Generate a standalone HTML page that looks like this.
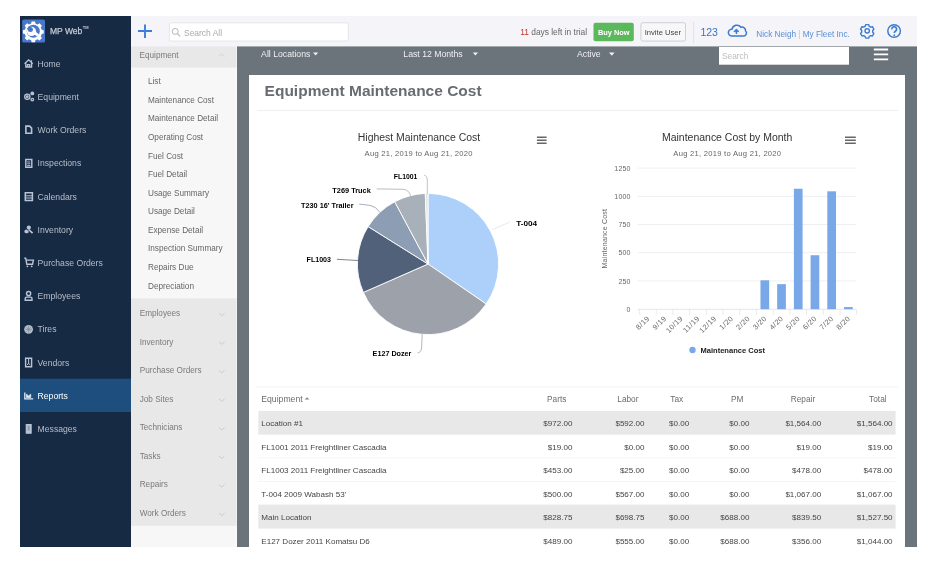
<!DOCTYPE html>
<html><head><meta charset="utf-8">
<style>
html,body{margin:0;padding:0}
body{width:938px;height:563px;background:#fff;position:relative;overflow:hidden;font-family:"Liberation Sans",sans-serif}
svg{position:absolute;left:0;top:0;will-change:transform}
text{font-family:"Liberation Sans",sans-serif}
.st{fill:#b7bec9;font-size:8.65px}
.sl{fill:#666;font-size:8.2px}
.sh{fill:#7a7a7a;font-size:8.2px}
.ic{fill:none;stroke:#b9c3d3;stroke-width:1.3}
.fb{fill:#f0f1f3;font-size:8.7px}
.tb{fill:#454545;font-size:8.05px}
.th{fill:#6c6c6c;font-size:8.3px}
.dl{fill:#000;font-size:7.1px;font-weight:bold}
.ax{fill:#666;font-size:7px;letter-spacing:0.2px}
</style></head><body>
<svg width="938" height="563" viewBox="0 0 938 563">
<!-- backgrounds -->
<rect x="20" y="16" width="111" height="531" fill="#172a44"/>
<rect x="131" y="16" width="786" height="30.4" fill="#f4f4f9"/>
<rect x="237" y="46.4" width="680" height="500.6" fill="#6b737b"/>
<rect x="131" y="46.4" width="105.5" height="500.6" fill="#f7f7f7"/>
<rect x="249" y="75" width="656" height="472" fill="#fff"/>

<!-- SIDEBAR -->
<g id="sidebar">
    <g id="logo">
    <rect x="22.2" y="19.6" width="22.8" height="22.9" rx="1.6" fill="#4a78c8"/>
    <g transform="translate(33.3,31.2)">
    <path fill="#fff" d="M-1.7,-9.7h3.4l0.4,2a7.6,7.6 0 0 1 2.3,1l1.8,-1.2l2.4,2.4l-1.2,1.8a7.6,7.6 0 0 1 1,2.3l2,0.4v3.4l-2,0.4a7.6,7.6 0 0 1 -1,2.3l1.2,1.8l-2.4,2.4l-1.8,-1.2a7.6,7.6 0 0 1 -2.3,1l-0.4,2h-3.4l-0.4,-2a7.6,7.6 0 0 1 -2.3,-1l-1.8,1.2l-2.4,-2.4l1.2,-1.8a7.6,7.6 0 0 1 -1,-2.3l-2,-0.4v-3.4l2,-0.4a7.6,7.6 0 0 1 1,-2.3l-1.2,-1.8l2.4,-2.4l1.8,1.2a7.6,7.6 0 0 1 2.3,-1z"/>
    <circle r="6.5" fill="#4a78c8"/>
    <clipPath id="lc"><circle r="6.5"/></clipPath>
    <g clip-path="url(#lc)">
      <circle cx="-1.8" cy="0.2" r="4.6" fill="#fff"/>
      <path d="M-1.5,-0.5L8,6.5" stroke="#fff" stroke-width="3"/>
      <circle cx="-2.9" cy="-1.6" r="2.5" fill="#4a78c8"/>
      <path d="M-2.9,-1.6L-8,-6.5" stroke="#4a78c8" stroke-width="3"/>
    </g>
    </g>
  </g>
  <text x="49.9" y="33.5" fill="#c8ccd3" stroke="#c8ccd3" stroke-width="0.25" font-size="9.5" textLength="32.4" lengthAdjust="spacingAndGlyphs">MP Web</text><text x="82.7" y="29.4" fill="#c8ccd3" font-size="4.4" font-weight="bold" textLength="5.8" lengthAdjust="spacingAndGlyphs">TM</text>

  <g class="ic">
    <!-- home -->
    <path d="M24.6,63.8L28.6,59.8L32.8,63.8M25.8,62.6V67H31.6V62.6M27.5,67V64.6H29.7V67M31.4,60.2V61.8"/>
    <!-- equipment gears -->
    <circle cx="27.3" cy="96.8" r="2.6"/><circle cx="27.3" cy="96.8" r="0.8"/>
    <circle cx="32.3" cy="93.4" r="1.3" fill="#b9c3d3"/><circle cx="32.3" cy="99.6" r="1.3"/>
    <!-- work orders doc -->
    <path d="M25.9,126.1H29.6L31.6,128.1V133.2H25.9Z" stroke-width="1.6"/>
    <!-- inspections clipboard -->
    <path d="M25.8,159.5H31.8V167.2H25.8Z" stroke-width="1.4"/><path d="M27.2,162H30.3M27.2,163.8H30.3M27.2,165.5H30.3" stroke-width="0.9"/>
    <!-- calendar -->
    <path d="M25.3,192.8H32.4V200.6H25.3Z" stroke-width="1.5"/><path d="M25.8,195.8H32M25.8,198H32" stroke-width="1"/>
    <!-- inventory -->
    <circle cx="28.8" cy="227.6" r="2.1" fill="#b9c3d3" stroke="none"/><ellipse cx="26.6" cy="231.4" rx="2.2" ry="1.9" fill="#b9c3d3" stroke="none"/><path d="M28.6,229.6L32.6,233.2" stroke-width="1.8"/><path d="M27,229.3L30,232.4" stroke="#172a44" stroke-width="0.7"/>
    <!-- cart -->
    <path d="M24.3,258.2H25.7L26.8,264.3H32.5L33.4,260.1H26" stroke-width="1.4"/><circle cx="27.4" cy="266.3" r="0.9" fill="#b9c3d3" stroke="none"/><circle cx="31.7" cy="266.3" r="0.9" fill="#b9c3d3" stroke="none"/>
    <!-- employees -->
    <circle cx="28.6" cy="293.6" r="2.1" stroke-width="1.4"/><path d="M25.2,300.2V298.4Q25.2,297.1 26.6,297.1H30.6Q32,297.1 32,298.4V300.2Z" stroke-width="1.4"/>
    <!-- tires -->
    <circle cx="28.6" cy="329.3" r="4.4" fill="#b3bdcb" stroke="none"/><path d="M26.4,327.3L30.8,331.3M30.8,327.3L26.4,331.3M28.6,325.8V332.8M25.2,329.3H32" stroke="#7d8aa0" stroke-width="0.7"/>
    <!-- vendors -->
    <path d="M25.6,358.3H31.6V366.7H25.6Z" stroke-width="1.4"/><path d="M28.6,358.6V364M27,364.8L28.6,363.6L30.2,364.8" stroke-width="1"/>
    <!-- reports -->
    <path d="M24.8,392.4V398.8H33.2" stroke="#dfe9f5" stroke-width="1.3"/><path d="M26.5,397.6V394.2L28.6,396L30.7,394.2V397.6Z" fill="#dfe9f5" stroke="#dfe9f5" stroke-width="0.8"/>
    <!-- messages phone -->
    <path d="M26.3,424.6H31.1V433.2H26.3Z" fill="#b9c3d3" stroke-width="1.2"/><path d="M27.6,425.8H29.8V430.6H27.6Z" fill="#8f9bb0" stroke="none"/>
  </g>
  <rect x="20" y="378.7" width="111" height="33.3" fill="#1d4e7e"/>
  <path d="M24.8,392.4V398.8H33.2" fill="none" stroke="#dfe9f5" stroke-width="1.3"/><path d="M26.5,397.6V394.2L28.6,396L30.7,394.2V397.6Z" fill="#dfe9f5" stroke="#dfe9f5" stroke-width="0.8"/>

  <text class="st" x="37.6" y="66.8">Home</text>
  <text class="st" x="37.6" y="100.4">Equipment</text>
  <text class="st" x="37.6" y="133.2">Work Orders</text>
  <text class="st" x="37.6" y="166">Inspections</text>
  <text class="st" x="37.6" y="199.6">Calendars</text>
  <text class="st" x="37.6" y="232.8">Inventory</text>
  <text class="st" x="37.6" y="265.6">Purchase Orders</text>
  <text class="st" x="37.6" y="299.2">Employees</text>
  <text class="st" x="37.6" y="332.4">Tires</text>
  <text class="st" x="37.6" y="365.6">Vendors</text>
  <text class="st" x="37.6" y="399.2" style="fill:#fff">Reports</text>
  <text class="st" x="37.6" y="432">Messages</text>
</g>
<g id="topbar">
  <path d="M138,31H152M145,24.4V38" stroke="#3b7dd8" stroke-width="1.9" fill="none"/>
  <rect x="169.3" y="22.8" width="179" height="18.3" rx="2" fill="#fff" stroke="#e4e4ea" stroke-width="1"/>
  <circle cx="175.2" cy="31.4" r="3" fill="none" stroke="#b5b5b5" stroke-width="1"/>
  <path d="M177.4,33.6L180.2,36.4" stroke="#b5b5b5" stroke-width="1.1"/>
  <text x="184" y="35.7" fill="#aaaaaa" font-size="9.2" textLength="38.1" lengthAdjust="spacingAndGlyphs">Search All</text>
  <text x="520.2" y="35.2" font-size="8.4"><tspan fill="#c0392b">11</tspan><tspan fill="#666"> days left in trial</tspan></text>
  <rect x="593.5" y="22.7" width="40.3" height="18.6" rx="2" fill="#5cb85c"/>
  <text x="597.9" y="35" fill="#fff" font-size="7.41" font-weight="bold">Buy Now</text>
  <rect x="640.9" y="22.7" width="44.6" height="18.4" rx="2" fill="#f7f7f9" stroke="#cfcfd4" stroke-width="1"/>
  <text x="644.7" y="35.3" fill="#444" font-size="7.64">Invite User</text>
  <path d="M693.5,21.5V43" stroke="#e2e3e8" stroke-width="1"/>
  <text x="700.4" y="36.1" fill="#3a74c2" font-size="10.55">123</text>
  <path d="M731.5,36H743.2A3,3 0 0 0 745.5,30.8A3.4,3.4 0 0 0 741,27.3A5,5 0 0 0 732,29.2A3.4,3.4 0 0 0 731.5,36Z" fill="none" stroke="#3b7bd2" stroke-width="1.5"/>
  <path d="M733.8,31.6L736.4,29L739,31.6Z" fill="#3b7bd2" stroke="#3b7bd2" stroke-width="0.8"/><path d="M736.4,30.5V34" stroke="#3b7bd2" stroke-width="1.5"/>
  <text x="756.3" y="36.5" fill="#5a8fd6" font-size="8.22">Nick Neigh <tspan fill="#b9c6dc">|</tspan> My Fleet Inc.</text>
  <g transform="translate(867.2,30.8)" fill="none" stroke="#3b7bd2" stroke-width="1.4">
    <path d="M-1.5,-6.2h3l0.5,1.6l1.5,0.9l1.7,-0.4l1.5,2.6l-1.2,1.2v1.7l1.2,1.2l-1.5,2.6l-1.7,-0.4l-1.5,0.9l-0.5,1.6h-3l-0.5,-1.6l-1.5,-0.9l-1.7,0.4l-1.5,-2.6l1.2,-1.2v-1.7l-1.2,-1.2l1.5,-2.6l1.7,0.4l1.5,-0.9z" stroke-linejoin="round"/>
    <circle r="2.2"/>
  </g>
  <circle cx="894.1" cy="30.95" r="6.3" fill="none" stroke="#3b7bd2" stroke-width="1.45"/>
  <path d="M891.9,29.3A2.35,2.35 0 1 1 895.6,31Q894.3,31.7 894.3,32.9V32.7" fill="none" stroke="#3b7bd2" stroke-width="1.7"/><circle cx="894.3" cy="35.2" r="0.9" fill="#3b7bd2"/>
</g>

<g id="submenu">
  <rect x="131" y="46.4" width="105.5" height="21.2" fill="#e8e8e8"/>
  <text class="sh" x="139.5" y="57.5">Equipment</text>
  <path d="M219,56.3L221.8,53.8L224.6,56.3" fill="none" stroke="#cfcfcf" stroke-width="0.9"/>
  <text class="sl" x="148" y="84.2">List</text>
  <text class="sl" x="148" y="102.8">Maintenance Cost</text>
  <text class="sl" x="148" y="121.4">Maintenance Detail</text>
  <text class="sl" x="148" y="139.9">Operating Cost</text>
  <text class="sl" x="148" y="158.5">Fuel Cost</text>
  <text class="sl" x="148" y="177.1">Fuel Detail</text>
  <text class="sl" x="148" y="195.7">Usage Summary</text>
  <text class="sl" x="148" y="214.3">Usage Detail</text>
  <text class="sl" x="148" y="232.9">Expense Detail</text>
  <text class="sl" x="148" y="251.4">Inspection Summary</text>
  <text class="sl" x="148" y="270">Repairs Due</text>
  <text class="sl" x="148" y="288.6">Depreciation</text>
  <rect x="131" y="298.3" width="105.5" height="227.5" fill="#e8e8e8"/>
  <g fill="none" stroke="#c6c6c6" stroke-width="0.9">
  <path d="M219,313.2L221.8,315.7L224.6,313.2"/>
  <path d="M219,341.8L221.8,344.3L224.6,341.8"/>
  <path d="M219,370.3L221.8,372.8L224.6,370.3"/>
  <path d="M219,398.9L221.8,401.4L224.6,398.9"/>
  <path d="M219,427.5L221.8,430L224.6,427.5"/>
  <path d="M219,456L221.8,458.5L224.6,456"/>
  <path d="M219,484.6L221.8,487.1L224.6,484.6"/>
  <path d="M219,513.1L221.8,515.6L224.6,513.1"/>
  </g>
  <text class="sh" x="139.7" y="315.9">Employees</text>
  <text class="sh" x="139.7" y="344.5">Inventory</text>
  <text class="sh" x="139.7" y="373">Purchase Orders</text>
  <text class="sh" x="139.7" y="401.6">Job Sites</text>
  <text class="sh" x="139.7" y="430.2">Technicians</text>
  <text class="sh" x="139.7" y="458.7">Tasks</text>
  <text class="sh" x="139.7" y="487.3">Repairs</text>
  <text class="sh" x="139.7" y="515.8">Work Orders</text>
</g>

<g id="filter">
  <text class="fb" x="261.1" y="56.8">All Locations</text>
  <path d="M313,52.6H318.2L315.6,55.6Z" fill="#f0f1f3"/>
  <text class="fb" x="403.3" y="57">Last 12 Months</text>
  <path d="M472.8,52.6H478L475.4,55.6Z" fill="#f0f1f3"/>
  <text class="fb" x="577" y="56.5" font-size="8.48">Active</text>
  <path d="M609,52.6H614.6L611.8,55.8Z" fill="#f0f1f3"/>
  <rect x="719" y="47" width="130" height="17.7" fill="#fff"/>
  <text x="721.9" y="59.4" fill="#bdbdbd" font-size="8.4">Search</text>
  <path d="M873.8,49.5H888.2M873.8,54.4H888.2M873.8,59.3H888.2" stroke="#fff" stroke-width="1.8"/>
</g>

<g id="content">
<text transform="translate(264.6,96) scale(1,1.03)" x="0" y="0" fill="#686c71" font-size="15.1" font-weight="bold" textLength="217" lengthAdjust="spacingAndGlyphs">Equipment Maintenance Cost</text>
<rect x="257" y="110" width="641" height="0.8" fill="#ececec"/>
<text x="357.8" y="140.7" fill="#333" font-size="10.44">Highest Maintenance Cost</text>
<text x="364.6" y="156.3" fill="#666" font-size="7.6" letter-spacing="0.27">Aug 21, 2019 to Aug 21, 2020</text>
<path d="M536.9,137.3H546.6M536.9,140.3H546.6M536.9,143.3H546.6" stroke="#666" stroke-width="1.45"/>
<path d="M428,264L428.00,193.40A70.6,70.6 0 0 1 486.20,303.96Z" fill="#add0fa" stroke="#fff" stroke-width="0.9" stroke-linejoin="round"/>
<path d="M428,264L486.20,303.96A70.6,70.6 0 0 1 363.37,292.42Z" fill="#9da1a9" stroke="#fff" stroke-width="0.9" stroke-linejoin="round"/>
<path d="M428,264L363.37,292.42A70.6,70.6 0 0 1 368.14,226.56Z" fill="#516179" stroke="#fff" stroke-width="0.9" stroke-linejoin="round"/>
<path d="M428,264L368.14,226.56A70.6,70.6 0 0 1 394.73,201.73Z" fill="#8d9db4" stroke="#fff" stroke-width="0.9" stroke-linejoin="round"/>
<path d="M428,264L394.73,201.73A70.6,70.6 0 0 1 425.27,193.45Z" fill="#a8b0b9" stroke="#fff" stroke-width="0.9" stroke-linejoin="round"/>
<path d="M428,264L425.27,193.45A70.6,70.6 0 0 1 428.00,193.40Z" fill="#dfe4e2" stroke="#fff" stroke-width="0.9" stroke-linejoin="round"/>
<g fill="none" stroke-width="0.9">
<path d="M492.3,229.6L509.9,222" stroke="#dce6f2"/>
<path d="M422.2,334.4L421.6,348Q421,352.5 417.8,352.8" stroke="#a9adb3"/>
<path d="M358.2,260.5L336.9,259.3" stroke="#6d7889"/>
<path d="M380,212.5Q376,206.3 370,205.4L359.2,204.1" stroke="#9aa7bb"/>
<path d="M410.7,195.6Q408.5,189.5 403,189.3L376.8,188.9" stroke="#b0b6bd"/>
<path d="M427.3,194V180Q427,175.5 424.1,175.1" stroke="#b8bcbf"/>
</g>
<text class="dl" x="516.2" y="225.9" textLength="20.9" lengthAdjust="spacingAndGlyphs">T-004</text>
<text class="dl" x="372.6" y="356" textLength="38.8" lengthAdjust="spacingAndGlyphs">E127 Dozer</text>
<text class="dl" x="306.6" y="262" textLength="24.3" lengthAdjust="spacingAndGlyphs">FL1003</text>
<text class="dl" x="301" y="208" textLength="52.5" lengthAdjust="spacingAndGlyphs">T230 16' Trailer</text>
<text class="dl" x="332.3" y="193.4" textLength="38.5" lengthAdjust="spacingAndGlyphs">T269 Truck</text>
<text class="dl" x="393.8" y="179.2" textLength="23.6" lengthAdjust="spacingAndGlyphs">FL1001</text>
<text x="662" y="140.7" fill="#333" font-size="10.47">Maintenance Cost by Month</text>
<text x="673.3" y="156.3" fill="#666" font-size="7.6" letter-spacing="0.27">Aug 21, 2019 to Aug 21, 2020</text>
<path d="M845,137.3H855.8M845,140.3H855.8M845,143.3H855.8" stroke="#666" stroke-width="1.45"/>
<rect x="637.5" y="280.57" width="219" height="0.8" fill="#ebebeb"/>
<rect x="637.5" y="252.35" width="219" height="0.8" fill="#ebebeb"/>
<rect x="637.5" y="224.12" width="219" height="0.8" fill="#ebebeb"/>
<rect x="637.5" y="195.90" width="219" height="0.8" fill="#ebebeb"/>
<rect x="637.5" y="167.67" width="219" height="0.8" fill="#ebebeb"/>
<text class="ax" x="630.70" y="311.90" text-anchor="end">0</text>
<text class="ax" x="630.70" y="283.67" text-anchor="end">250</text>
<text class="ax" x="630.70" y="255.45" text-anchor="end">500</text>
<text class="ax" x="630.70" y="227.22" text-anchor="end">750</text>
<text class="ax" x="630.70" y="199.00" text-anchor="end">1000</text>
<text class="ax" x="630.70" y="170.77" text-anchor="end">1250</text>
<rect x="637.5" y="308.8" width="219" height="0.9" fill="#dfe3e8"/>
<rect x="639.10" y="309.2" width="0.8" height="5.8" fill="#e4e7ed"/>
<rect x="655.81" y="309.2" width="0.8" height="5.8" fill="#e4e7ed"/>
<rect x="672.52" y="309.2" width="0.8" height="5.8" fill="#e4e7ed"/>
<rect x="689.23" y="309.2" width="0.8" height="5.8" fill="#e4e7ed"/>
<rect x="705.94" y="309.2" width="0.8" height="5.8" fill="#e4e7ed"/>
<rect x="722.65" y="309.2" width="0.8" height="5.8" fill="#e4e7ed"/>
<rect x="739.36" y="309.2" width="0.8" height="5.8" fill="#e4e7ed"/>
<rect x="756.07" y="309.2" width="0.8" height="5.8" fill="#e4e7ed"/>
<rect x="772.78" y="309.2" width="0.8" height="5.8" fill="#e4e7ed"/>
<rect x="789.49" y="309.2" width="0.8" height="5.8" fill="#e4e7ed"/>
<rect x="806.20" y="309.2" width="0.8" height="5.8" fill="#e4e7ed"/>
<rect x="822.91" y="309.2" width="0.8" height="5.8" fill="#e4e7ed"/>
<rect x="839.62" y="309.2" width="0.8" height="5.8" fill="#e4e7ed"/>
<rect x="856.33" y="309.2" width="0.8" height="5.8" fill="#e4e7ed"/>
<text class="ax" transform="translate(650.15,318.9) rotate(-45)" text-anchor="end" style="font-size:7.4px;letter-spacing:0.45px">8/19</text>
<text class="ax" transform="translate(666.87,318.9) rotate(-45)" text-anchor="end" style="font-size:7.4px;letter-spacing:0.45px">9/19</text>
<text class="ax" transform="translate(683.57,318.9) rotate(-45)" text-anchor="end" style="font-size:7.4px;letter-spacing:0.45px">10/19</text>
<text class="ax" transform="translate(700.28,318.9) rotate(-45)" text-anchor="end" style="font-size:7.4px;letter-spacing:0.45px">11/19</text>
<text class="ax" transform="translate(717.00,318.9) rotate(-45)" text-anchor="end" style="font-size:7.4px;letter-spacing:0.45px">12/19</text>
<text class="ax" transform="translate(733.70,318.9) rotate(-45)" text-anchor="end" style="font-size:7.4px;letter-spacing:0.45px">1/20</text>
<text class="ax" transform="translate(750.41,318.9) rotate(-45)" text-anchor="end" style="font-size:7.4px;letter-spacing:0.45px">2/20</text>
<rect x="760.48" y="280.30" width="8.7" height="28.90" fill="#78a8e8"/>
<text class="ax" transform="translate(767.12,318.9) rotate(-45)" text-anchor="end" style="font-size:7.4px;letter-spacing:0.45px">3/20</text>
<rect x="777.18" y="284.14" width="8.7" height="25.06" fill="#78a8e8"/>
<text class="ax" transform="translate(783.83,318.9) rotate(-45)" text-anchor="end" style="font-size:7.4px;letter-spacing:0.45px">4/20</text>
<rect x="793.89" y="188.74" width="8.7" height="120.46" fill="#78a8e8"/>
<text class="ax" transform="translate(800.54,318.9) rotate(-45)" text-anchor="end" style="font-size:7.4px;letter-spacing:0.45px">5/20</text>
<rect x="810.61" y="255.23" width="8.7" height="53.97" fill="#78a8e8"/>
<text class="ax" transform="translate(817.25,318.9) rotate(-45)" text-anchor="end" style="font-size:7.4px;letter-spacing:0.45px">6/20</text>
<rect x="827.31" y="191.33" width="8.7" height="117.87" fill="#78a8e8"/>
<text class="ax" transform="translate(833.96,318.9) rotate(-45)" text-anchor="end" style="font-size:7.4px;letter-spacing:0.45px">7/20</text>
<rect x="844.02" y="307.05" width="8.7" height="2.15" fill="#78a8e8"/>
<text class="ax" transform="translate(850.67,318.9) rotate(-45)" text-anchor="end" style="font-size:7.4px;letter-spacing:0.45px">8/20</text>
<text class="ax" transform="translate(606.8,238.6) rotate(-90)" text-anchor="middle" letter-spacing="0.45">Maintenance Cost</text>
<circle cx="692.5" cy="350" r="3.2" fill="#78a8e8"/>
<text x="700.5" y="352.9" fill="#222" font-size="7.6" font-weight="bold" textLength="64.5" lengthAdjust="spacingAndGlyphs">Maintenance Cost</text>
<rect x="256" y="386.6" width="642" height="0.8" fill="#efefef"/>
<text class="th" x="261.3" y="402.3" textLength="41.3" lengthAdjust="spacingAndGlyphs">Equipment</text>
<path d="M304.6,399.6H309.4L307,397.3Z" fill="#888"/>
<text class="th" x="566.4" y="402.3" text-anchor="end">Parts</text>
<text class="th" x="638.5" y="402.3" text-anchor="end">Labor</text>
<text class="th" x="683.2" y="402.3" text-anchor="end">Tax</text>
<text class="th" x="743.4" y="402.3" text-anchor="end">PM</text>
<text class="th" x="815.2" y="402.3" text-anchor="end">Repair</text>
<text class="th" x="886.6" y="402.3" text-anchor="end">Total</text>
<rect x="258.3" y="410.90" width="637.3" height="23.7" fill="#e8e8e8"/>
<text class="tb" x="261.3" y="426.30">Location #1</text>
<text class="tb" x="572.4" y="426.30" text-anchor="end">$972.00</text>
<text class="tb" x="644.5" y="426.30" text-anchor="end">$592.00</text>
<text class="tb" x="689.2" y="426.30" text-anchor="end">$0.00</text>
<text class="tb" x="749.4" y="426.30" text-anchor="end">$0.00</text>
<text class="tb" x="821.2" y="426.30" text-anchor="end">$1,564.00</text>
<text class="tb" x="892.6" y="426.30" text-anchor="end">$1,564.00</text>
<rect x="258.3" y="457.50" width="637.3" height="0.7" fill="#f1f1f1"/>
<text class="tb" x="261.3" y="449.80">FL1001 2011 Freightliner Cascadia</text>
<text class="tb" x="572.4" y="449.80" text-anchor="end">$19.00</text>
<text class="tb" x="644.5" y="449.80" text-anchor="end">$0.00</text>
<text class="tb" x="689.2" y="449.80" text-anchor="end">$0.00</text>
<text class="tb" x="749.4" y="449.80" text-anchor="end">$0.00</text>
<text class="tb" x="821.2" y="449.80" text-anchor="end">$19.00</text>
<text class="tb" x="892.6" y="449.80" text-anchor="end">$19.00</text>
<rect x="258.3" y="481.00" width="637.3" height="0.7" fill="#f1f1f1"/>
<text class="tb" x="261.3" y="473.30">FL1003 2011 Freightliner Cascadia</text>
<text class="tb" x="572.4" y="473.30" text-anchor="end">$453.00</text>
<text class="tb" x="644.5" y="473.30" text-anchor="end">$25.00</text>
<text class="tb" x="689.2" y="473.30" text-anchor="end">$0.00</text>
<text class="tb" x="749.4" y="473.30" text-anchor="end">$0.00</text>
<text class="tb" x="821.2" y="473.30" text-anchor="end">$478.00</text>
<text class="tb" x="892.6" y="473.30" text-anchor="end">$478.00</text>
<rect x="258.3" y="504.50" width="637.3" height="0.7" fill="#f1f1f1"/>
<text class="tb" x="261.3" y="496.80">T-004 2009 Wabash 53'</text>
<text class="tb" x="572.4" y="496.80" text-anchor="end">$500.00</text>
<text class="tb" x="644.5" y="496.80" text-anchor="end">$567.00</text>
<text class="tb" x="689.2" y="496.80" text-anchor="end">$0.00</text>
<text class="tb" x="749.4" y="496.80" text-anchor="end">$0.00</text>
<text class="tb" x="821.2" y="496.80" text-anchor="end">$1,067.00</text>
<text class="tb" x="892.6" y="496.80" text-anchor="end">$1,067.00</text>
<rect x="258.3" y="504.90" width="637.3" height="23.7" fill="#e8e8e8"/>
<text class="tb" x="261.3" y="520.30">Main Location</text>
<text class="tb" x="572.4" y="520.30" text-anchor="end">$828.75</text>
<text class="tb" x="644.5" y="520.30" text-anchor="end">$698.75</text>
<text class="tb" x="689.2" y="520.30" text-anchor="end">$0.00</text>
<text class="tb" x="749.4" y="520.30" text-anchor="end">$688.00</text>
<text class="tb" x="821.2" y="520.30" text-anchor="end">$839.50</text>
<text class="tb" x="892.6" y="520.30" text-anchor="end">$1,527.50</text>
<text class="tb" x="261.3" y="543.80">E127 Dozer 2011 Komatsu D6</text>
<text class="tb" x="572.4" y="543.80" text-anchor="end">$489.00</text>
<text class="tb" x="644.5" y="543.80" text-anchor="end">$555.00</text>
<text class="tb" x="689.2" y="543.80" text-anchor="end">$0.00</text>
<text class="tb" x="749.4" y="543.80" text-anchor="end">$688.00</text>
<text class="tb" x="821.2" y="543.80" text-anchor="end">$356.00</text>
<text class="tb" x="892.6" y="543.80" text-anchor="end">$1,044.00</text>
</g>
</svg>
</body></html>
